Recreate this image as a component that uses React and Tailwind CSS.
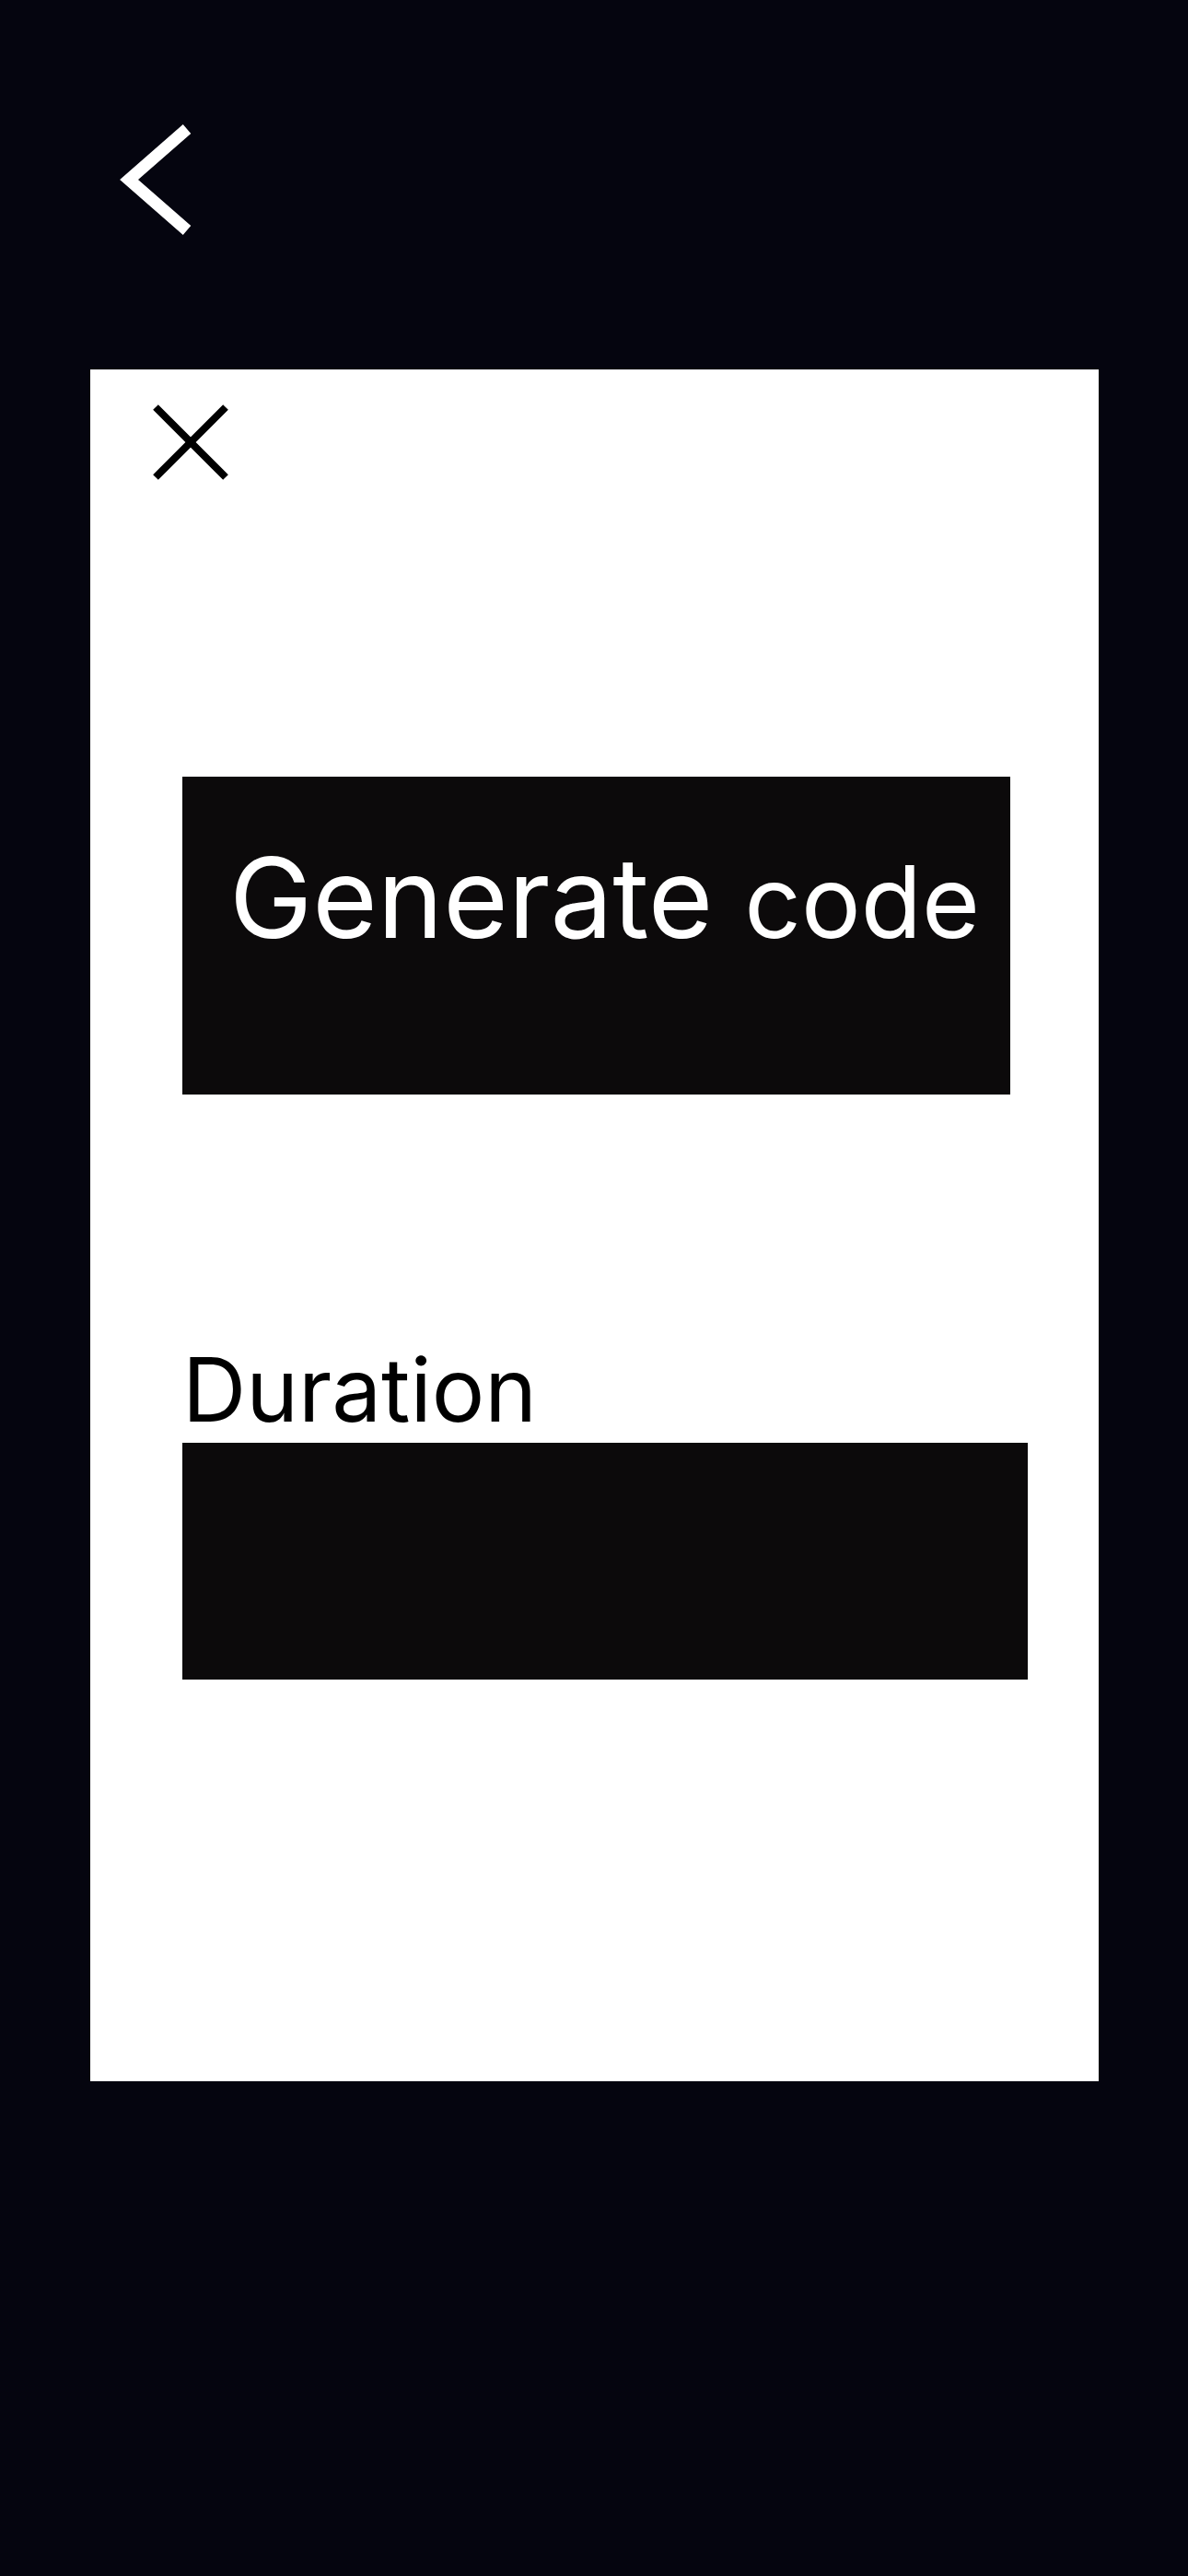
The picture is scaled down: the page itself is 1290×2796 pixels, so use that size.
import React from "react";

const App = () => {
    return (
        <div
            className="min-h-[2796px] w-full bg-[#05050f] flex flex-col"
            style={{ fontFamily: "Inter, 'Liberation Sans', sans-serif" }}
        >
            {/* Header with back chevron */}
            <div className="h-[401px] pl-[128px] pt-[130px]">
                <button className="block">
                    <svg width="84" height="132" viewBox="0 0 84 132" fill="none">
                        <polyline
                            points="75,10 12,65 75,120"
                            stroke="white"
                            strokeWidth="13"
                            strokeLinejoin="miter"
                            strokeLinecap="butt"
                        />
                    </svg>
                </button>
            </div>

            {/* Modal card */}
            <div className="ml-[98px] w-[1095px] h-[1858px] bg-white flex flex-col pl-[100px] pt-[36px]">
                <button className="-ml-[34px] block w-[86px] h-[86px]">
                    <svg width="86" height="86" viewBox="0 0 86 86" fill="none">
                        <path d="M5 5 L81 81 M81 5 L5 81" stroke="black" strokeWidth="8" />
                    </svg>
                </button>

                <button className="mt-[320px] w-[899px] h-[345px] bg-[#0c0a0b] text-white text-left pl-[51px] pt-[71px] flex items-start">
                    <span className="text-[121px] leading-none font-normal whitespace-nowrap">
                        Generate <span className="text-[108px]">code</span>
                    </span>
                </button>

                <label className="mt-[272px] block text-[96px] leading-none text-black">
                    Duration
                </label>
                <div className="mt-[10px] w-[918px] h-[257px] bg-[#0c0a0b]" />
            </div>
        </div>
    );
};

export default App;
